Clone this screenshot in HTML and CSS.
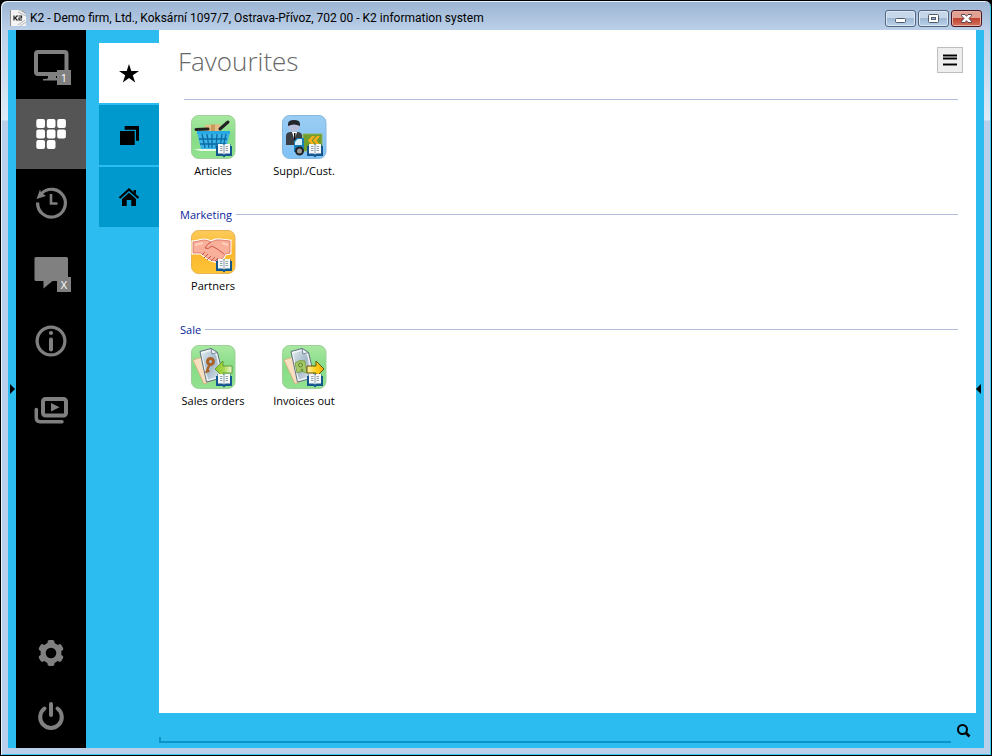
FILE: index.html
```html
<!DOCTYPE html>
<html lang="en">
<head>
<meta charset="utf-8">
<title>K2 information system</title>
<link rel="stylesheet" href="styles.css">
</head>
<body>
<svg class="defs" aria-hidden="true">
  <defs>
    <linearGradient id="green" x1="0" y1="0" x2="0" y2="1"><stop offset="0" stop-color="#a9e8a2"/><stop offset=".5" stop-color="#86dc86"/><stop offset="1" stop-color="#92e290"/></linearGradient>
    <linearGradient id="blue" x1="0" y1="0" x2="0" y2="1"><stop offset="0" stop-color="#9bcdf3"/><stop offset="1" stop-color="#7fc2f5"/></linearGradient>
    <linearGradient id="orange" x1="0" y1="0" x2="0" y2="1"><stop offset="0" stop-color="#fccb5a"/><stop offset=".5" stop-color="#fbb62c"/><stop offset="1" stop-color="#fcc437"/></linearGradient>
    <linearGradient id="sheet" x1="0" y1="0" x2="1" y2="1"><stop offset="0" stop-color="#dfe9ef"/><stop offset=".5" stop-color="#a3b8c8"/><stop offset="1" stop-color="#dfe9ef"/></linearGradient>
    <linearGradient id="leaf" x1="0" y1="0" x2="1" y2="0"><stop offset="0" stop-color="#8cc928"/><stop offset=".5" stop-color="#a4d64c"/><stop offset="1" stop-color="#eef8d8"/></linearGradient>
    <linearGradient id="gold" x1="0" y1="0" x2="1" y2="0"><stop offset="0" stop-color="#fff0a8"/><stop offset=".5" stop-color="#ffd21e"/><stop offset="1" stop-color="#f5a800"/></linearGradient>
    <symbol id="book" viewBox="0 0 16 15">
      <path d="M0 3h1.500V1H7l1 1 1-1h5.500v2H16v10H9.500L8 14.500 6.500 13H0z" fill="#14578f"/>
      <path d="M2 1h4.500L8 2l1.500-1H14v9.500H9.500L8 11.500 6.500 10.500H2z" fill="#f6f8fa"/>
      <path d="M8 2v9" stroke="#8fa0ae" fill="none"/>
      <path d="M4 3.500h2.500M4 5.500h2.500M4 7.500h2.500M9.500 3.500H12M9.500 5.500H12M9.500 7.500H12" stroke="#7d8b96" stroke-width=".8" fill="none"/>
    </symbol>
    <symbol id="papers" viewBox="0 0 44 44">
      <path d="M2 15l9-3 9 24-7 3z" fill="#f8dfc0" stroke="#d8a97c" stroke-width=".8"/>
      <path d="M9 6.500l11-3 6.500 4 6 25-17 4.500z" fill="#eef3f6" stroke="#5d7080"/>
      <path d="M11 8.500l8.500-2.500 5.500 4 5 21-13 3.500z" fill="url(#sheet)"/>
      <path d="M20 3.500l1 5.500 5.500-1.500z" fill="#eef5f8" stroke="#5d7080" stroke-width=".8"/>
    </symbol>
  </defs>
</svg>
<div class="window">
  <header class="titlebar">
    <svg class="app-icon" viewBox="0 0 16 16" aria-hidden="true"><path d="M0 0h11l5 5v11H0z" fill="#f4f4f4"/><path d="M.500 0v16" stroke="#8a8a8a"/><path d="M9 0l7 3M8 2l8 4M15 10l-7 5M16 12l-6 4M12 0l3 3" stroke="#a4a4a4" stroke-width=".8"/><path d="M4 5.500v5M7.500 5.500L5 8l2.500 2.500M8.500 6h3v2h-2.500v2H12" stroke="#222" stroke-width="1.200" fill="none"/></svg>
    <span class="caption">K2 - Demo firm, Ltd., Koksární 1097/7, Ostrava-Přívoz, 702 00 - K2 information system</span>
    <div class="controls">
      <button type="button" aria-label="Minimize"><svg viewBox="0 0 29 15"><rect x="9.500" y="7.500" width="10" height="4" rx="1" fill="#fff" stroke="#4f5a6b"/></svg></button>
      <button type="button" aria-label="Maximize"><svg viewBox="0 0 29 15"><rect x="9.500" y="3.500" width="10" height="8" rx="1" fill="#fff" stroke="#4f5a6b"/><rect x="12.500" y="6.500" width="4" height="2" fill="#9fb8d3" stroke="#4f5a6b"/></svg></button>
      <button type="button" class="close" aria-label="Close"><svg viewBox="0 0 29 15"><path d="M9.500 3.500h3.500l1.500 1.800L16 3.500h3.500v1.300L17 7.500l2.500 2.700v1.300H16l-1.500-1.800L13 11.500H9.500v-1.300L12 7.500 9.500 4.800z" fill="#fff" stroke="#544350"/></svg></button>
    </div>
  </header>
  <div class="client">
    <button type="button" class="gutter" aria-label="Expand left panel"><svg viewBox="0 0 8 10"><path d="M2 0l5 5-5 5z"/></svg></button>
    <nav class="sidebar" aria-label="Main">
      <button type="button" class="nav" aria-label="Desktop"><svg viewBox="0 0 40 40"><rect x="5" y="8" width="30.500" height="22" rx="2" fill="none" stroke="#808080" stroke-width="4"/><path d="M17 32h8v2h2v2.500H12V35q5 0 5-1z" fill="#808080"/></svg><span class="badge">1</span></button>
      <button type="button" class="nav active" aria-label="Applications"><svg viewBox="0 0 40 40" fill="#fff"><rect x="5.300" y="6" width="8.700" height="9" rx="2"/><rect x="15.800" y="6" width="8.700" height="9" rx="2"/><rect x="26.200" y="6" width="8.700" height="9" rx="2"/><rect x="5.300" y="16.500" width="8.700" height="9" rx="2"/><rect x="15.800" y="16.500" width="8.700" height="9" rx="2"/><rect x="26.200" y="16.500" width="8.700" height="9" rx="2"/><rect x="5.300" y="27" width="8.700" height="9" rx="2"/><rect x="15.800" y="27" width="8.700" height="9" rx="2"/></svg></button>
      <button type="button" class="nav" aria-label="History"><svg viewBox="0 0 40 40" fill="none" stroke="#808080" stroke-width="3.200"><path d="M6.600 20.500A13.900 13.900 0 1 0 10.500 11.500"/><path d="M20 12v9.500h6.500" stroke-width="2.600"/><path d="M9 7.500l1 3 5 3.500-9.500 3z" fill="#808080" stroke="none"/></svg></button>
      <button type="button" class="nav" aria-label="Messages"><svg viewBox="0 0 40 40"><path d="M5 6h30.500q1.500 0 1.500 1.500v21q0 1.500-1.500 1.500H21.500L12.500 37.500V30H5q-1.500 0-1.500-1.500v-21q0-1.500 1.500-1.500z" fill="#808080"/></svg><span class="badge">X</span></button>
      <button type="button" class="nav" aria-label="Information"><svg viewBox="0 0 40 40"><circle cx="20" cy="21" r="13.900" fill="none" stroke="#808080" stroke-width="3.200"/><circle cx="20" cy="13" r="2.100" fill="#808080"/><path d="M20 19.500v10" stroke="#808080" stroke-width="4" stroke-linecap="round"/></svg></button>
      <button type="button" class="nav" aria-label="Media"><svg viewBox="0 0 40 40" fill="none" stroke="#808080"><rect x="12" y="10" width="23" height="16.500" rx="2.500" stroke-width="4"/><path d="M20 14l8.500 4.300-8.500 4.300z" fill="#808080" stroke="none"/><path d="M5.300 20.500V29q0 3.700 3.700 3.700h22" stroke-width="3.500" stroke-linecap="round"/></svg></button>
      <span class="spacer"></span>
      <button type="button" class="nav low" aria-label="Settings"><svg viewBox="0 0 40 40"><g fill="#808080"><circle cx="20" cy="20" r="10.500"/><rect x="16.500" y="7" width="7" height="26" rx="2"/><rect x="16.500" y="7" width="7" height="26" rx="2" transform="rotate(60 20 20)"/><rect x="16.500" y="7" width="7" height="26" rx="2" transform="rotate(120 20 20)"/></g><circle cx="20" cy="20" r="5.300"/></svg></button>
      <button type="button" class="nav low" aria-label="Exit"><svg viewBox="0 0 40 40" fill="none" stroke="#808080" stroke-width="4" stroke-linecap="round"><path d="M13.500 12.500A10.800 10.800 0 1 0 26.500 12.500"/><path d="M20 8v11"/></svg></button>
    </nav>
    <nav class="tabs" aria-label="Pages">
      <button type="button" class="tab current" aria-label="Favourites"><svg viewBox="0 0 24 24"><path d="M12 3l2.300 7H22l-6.200 4.300 2.400 7.200L12 17l-6.200 4.500 2.400-7.200L2 10h7.700z"/></svg></button>
      <button type="button" class="tab" aria-label="Windows"><svg viewBox="0 0 24 24"><path d="M3 8h14.700v14H3zM7.700 3H22v14.700h-3V6.700H7.700z"/></svg></button>
      <button type="button" class="tab" aria-label="Home"><svg viewBox="0 0 24 24"><path d="M2.500 13L12 4.500l9.500 8.500" fill="none" stroke="#000" stroke-width="2.300"/><path d="M16.500 5H19v4l-2.500-2zM12 7.800l7 6.200v7h-4.700v-6h-4.600v6H5v-7z"/></svg></button>
    </nav>
    <div class="content">
      <main class="panel">
        <div class="heading">
          <h1>Favourites</h1>
          <button type="button" class="menu" aria-label="Menu"><svg viewBox="0 0 24 24"><path d="M5 6h14v6H5zM5 15h14v3H5z" fill="#808080"/><path d="M5 7.500h14M5 10.500h14M5 16.500h14" stroke="#000"/></svg></button>
        </div>
        <section>
          <div class="rule"></div>
          <div class="tiles">
            <a class="tile" href="#articles"><svg viewBox="0 0 44 44"><rect x=".5" y=".5" width="43.500" height="43" rx="7" fill="url(#green)" stroke="#9fd09a"/><path d="M3 34h30v2H9z" fill="#fff" opacity=".8"/><path d="M14 10l15-1v8H14z" fill="#e3bd83"/><path d="M20 9.500h4V16h-4z" fill="#c99b5e"/><path d="M6 17h33l-4 17H10z" fill="#3db4e6"/><path d="M11 19l3 14M16 19l2 14M21 19v14M26 19l-1 14M31 19l-2 14M35 19l-3 14M8 24h28M9 29h26" stroke="#0c6aa5" stroke-width="1.300"/><path d="M6 17.500h33" stroke="#27a9e4" stroke-width="3"/><path d="M5 14.500l12-.5M29 14l8-7" stroke="#222" stroke-width="3" stroke-linecap="round"/><use href="#book" x="25" y="28" width="16" height="15"/></svg>Articles</a>
            <a class="tile" href="#contacts"><svg viewBox="0 0 44 44"><rect x=".5" y=".5" width="43.500" height="43" rx="7" fill="url(#blue)" stroke="#87b9de"/><path d="M4 30V21q0-4 5-4h6q5 0 5 4v9z" fill="#3c3e45"/><path d="M10 17h5l-2.500 8z" fill="#fff"/><path d="M12 18h1.500v7H12z" fill="#111"/><circle cx="12" cy="11.500" r="5.500" fill="#b9bddc"/><path d="M6 9q0-4 6-4t6 4v2q-6-3-12 0z" fill="#24252a"/><path d="M21 19h19v17H21z" fill="#6f9e2d" stroke="#91b45c"/><path d="M30 21l-4 4.500 4 4.500h3l-3.500-4.500L33 21zM35 21l-4 4.500 4 4.500h3l-3.500-4.500L38 21z" fill="#ffae16"/><path d="M12 26l3-3h7v14H12z" fill="#177cb8"/><path d="M13 27l2.500-3H20v6h-7z" fill="#d6eff9"/><circle cx="17.500" cy="36" r="3.500" fill="#999" stroke="#222" stroke-width="2"/><use href="#book" x="25" y="28" width="16" height="15"/></svg>Suppl./Cust.</a>
          </div>
        </section>
        <section>
          <h2 class="rule">Marketing</h2>
          <div class="tiles">
            <a class="tile" href="#partners"><svg viewBox="0 0 44 44"><rect x=".5" y=".5" width="43.500" height="43" rx="7" fill="url(#orange)" stroke="#e8b355"/><path d="M2 12q6-1 10-2 5 0 8 2 5-3 10-2l9 1v12l-5 1q-2 6-7 7-5 1-12-4l-5-4H2z" fill="#fff" stroke="#fff" stroke-width="3"/><path d="M2 12q6-1 10-2 5 0 8 2 5-3 10-2l9 1v12l-5 1q-2 6-7 7-5 1-12-4l-5-4H2z" fill="#f9b09a" stroke="#d9705c" stroke-width=".8"/><path d="M20 12q-4 2-6 6 3 2 7-2 6 3 12 8M11 25l3-3M13 28l4-4M16 30l4-4M20 31l4-4M24 31l3-3" fill="none" stroke="#c9584a" stroke-width="1"/><path d="M4 15l8-2M31 13l6 2" stroke="#ffd0bc" stroke-width="2"/><use href="#book" x="25" y="28" width="16" height="15"/></svg>Partners</a>
          </div>
        </section>
        <section>
          <h2 class="rule">Sale</h2>
          <div class="tiles">
            <a class="tile" href="#orders"><svg viewBox="0 0 44 44"><rect x=".5" y=".5" width="43.500" height="43" rx="7" fill="url(#green)" stroke="#9fd09a"/><use href="#papers" width="44" height="44"/><circle cx="19.500" cy="16.500" r="3" fill="none" stroke="#a8622a" stroke-width="3"/><path d="M18.500 19.500L15 28M16 25.500l2.500 1" stroke="#a8622a" stroke-width="2.200"/><path d="M24 24l8-8v5h9v7h-9v4z" fill="url(#leaf)" stroke="#5d8d22" stroke-width=".8"/><use href="#book" x="25" y="28" width="16" height="15"/></svg>Sales orders</a>
            <a class="tile" href="#invoices"><svg viewBox="0 0 44 44"><rect x=".5" y=".5" width="43.500" height="43" rx="7" fill="url(#green)" stroke="#9fd09a"/><use href="#papers" width="44" height="44"/><path d="M13 18q5-4 10-2l2 12q-5-3-10 0z" fill="#a6c76a" stroke="#6f9a3e" stroke-width=".8"/><circle cx="18.500" cy="20" r="2" fill="none" stroke="#5e8a2e"/><circle cx="20" cy="25" r="1.500" fill="#6f9a3e"/><path d="M42 24l-8-8v5h-9v7h9v4z" fill="url(#gold)" stroke="#6b5200"/><use href="#book" x="25" y="28" width="16" height="15"/></svg>Invoices out</a>
          </div>
        </section>
      </main>
      <form class="search">
        <input type="text" aria-label="Search">
        <button type="button" aria-label="Find"><svg viewBox="0 0 16 16" fill="none" stroke="#000"><circle cx="7.500" cy="6.500" r="4.500" stroke-width="2"/><path d="M11 10l3.500 3.500" stroke-width="2.600"/></svg></button>
      </form>
    </div>
    <button type="button" class="gutter" aria-label="Expand right panel"><svg viewBox="0 0 8 10"><path d="M5 0L0 5l5 5z"/></svg></button>
  </div>
</div>
</body>
</html>
```
FILE: styles.css
```css
* { box-sizing: border-box; }
body {
  margin: 0;
  background: #000;
  font-family: "Open Sans", "Noto Sans", sans-serif;
  font-size: 11px;
  color: #000;
}
button {
  margin: 0;
  padding: 0;
  border: 0;
  background: none;
  font: inherit;
  color: inherit;
}
svg { display: block; }
.defs { position: absolute; width: 0; height: 0; }

.window {
  display: flex;
  flex-direction: column;
  height: 100vh;
  padding: 0 7px 7px;
  border: 1px solid #000;
  border-radius: 7px 7px 0 0;
  background: linear-gradient(#9ab4d2 0, #bcd0e9 30px, #dfeaf6 119px, #bad0ea 120px);
  box-shadow: inset 1px 1px #e8f2fa, inset -1px -1px #3cc6ee;
}
.titlebar {
  display: flex;
  align-items: flex-start;
  height: 29px;
  flex: none;
  padding: 9px 2px 0 2px;
}
.app-icon { width: 16px; height: 16px; }
.caption {
  flex: 1;
  margin-left: 4px;
  font-family: Roboto, "Open Sans", sans-serif;
  font-size: 12px;
  line-height: 17px;
  white-space: nowrap;
}
.controls { display: flex; gap: 2px; }
.controls button {
  width: 31px;
  height: 17px;
  border: 1px solid #53657f;
  border-radius: 3px;
  background: linear-gradient(#c6d7ea 0 45%, #9fb9d5 50%, #b9d2ea);
  box-shadow: inset 0 0 0 1px #dce8f4;
}
.controls svg { width: 29px; height: 15px; }
.controls .close {
  border-color: #4a1420;
  background: linear-gradient(#e0a193 0 45%, #bf4430 50%, #d4735c);
  box-shadow: inset 0 0 0 1px #e6b3a8;
}

.client {
  display: flex;
  flex: 1;
  min-height: 0;
  background: #2cbcf0;
}
.gutter {
  display: flex;
  align-items: center;
  flex: none;
  width: 8px;
}
.gutter svg { width: 8px; height: 10px; }

.sidebar {
  display: flex;
  flex-direction: column;
  flex: none;
  width: 70px;
  background: #000;
}
.nav {
  position: relative;
  display: flex;
  justify-content: center;
  height: 69px;
  padding-top: 14px;
}
.nav svg { width: 40px; height: 40px; }
.nav.active { background: #555; box-shadow: 0 1px #555; }
.nav.low { height: 63px; padding-top: 11px; }
.badge {
  position: absolute;
  left: 41px;
  top: 40px;
  width: 14px;
  height: 15px;
  background: #808080;
  color: #fff;
  line-height: 15px;
  text-align: center;
}
.spacer { flex: 1; }

.tabs {
  display: flex;
  flex-direction: column;
  flex: none;
  gap: 2px;
  padding: 13px 0 0 13px;
}
.tab {
  display: grid;
  place-items: center;
  width: 60px;
  height: 60px;
  background: #0099ce;
}
.tab svg { width: 24px; height: 24px; }
.tab.current { background: #fff; }

.content {
  display: flex;
  flex-direction: column;
  flex: 1;
  min-width: 0;
}
.panel {
  flex: 1;
  padding: 0 18px 0 21px;
  background: #fff;
}
.heading {
  display: flex;
  justify-content: space-between;
  align-items: flex-start;
  height: 60px;
  margin: 0 -5px 0 -2px;
  padding-top: 17px;
}
h1 {
  margin: 0;
  font-size: 26px;
  line-height: 28px;
  font-weight: 300;
  color: #686868;
}
.menu {
  width: 26px;
  height: 26px;
  border: 1px solid #bdbdbd;
  background: #eee;
}
.menu svg { width: 24px; height: 24px; }

section { height: 115px; }
.rule {
  display: flex;
  align-items: center;
  gap: 4px;
  height: 19px;
  margin: 0;
  font-size: 11px;
  font-weight: 400;
  color: #0a259b;
}
.rule::after {
  content: "";
  flex: 1;
  height: 1px;
  background: #b0bedb;
}
div.rule { padding-left: 4px; }
.tiles {
  display: flex;
  gap: 1px;
  margin-left: -12px;
  padding-top: 6px;
}
.tile {
  display: flex;
  flex-direction: column;
  align-items: center;
  gap: 4px;
  width: 90px;
  line-height: 16px;
  color: #000;
  text-decoration: none;
}
.tile svg { width: 44px; height: 44px; overflow: visible; }

.search {
  display: flex;
  align-items: flex-start;
  flex: none;
  height: 35px;
}
.search input {
  flex: 1;
  min-width: 0;
  height: 30px;
  margin: 0 4px 0 0;
  padding: 0 6px;
  border: 0;
  border-bottom: 2px solid #0d93c6;
  background: linear-gradient(#0d93c6, #0d93c6) left bottom / 2px 4px no-repeat;
  font: inherit;
  outline: 0;
}
.search button { width: 21px; padding: 10px 0 0; }
.search svg { width: 16px; height: 16px; }
```
